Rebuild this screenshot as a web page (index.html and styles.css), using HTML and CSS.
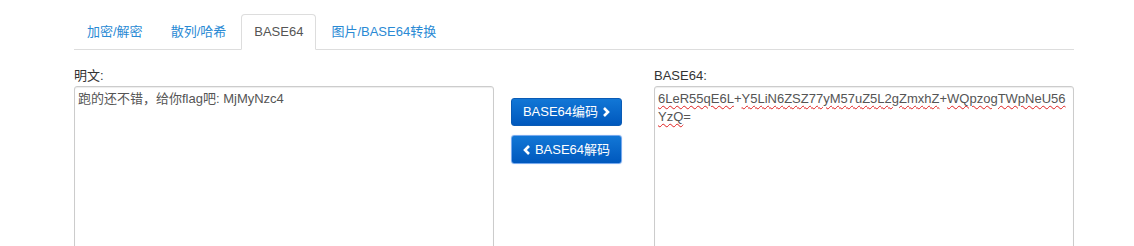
FILE: index.html
```html
<!DOCTYPE html>
<html lang="zh">
<head>
<meta charset="utf-8">
<title>BASE64</title>
<link rel="stylesheet" href="styles.css">
</head>
<body>
<div class="page">
  <ul class="tabs">
    <li class="tab"><a href="#">加密/解密</a></li>
    <li class="tab"><a href="#">散列/哈希</a></li>
    <li class="tab active"><a href="#">BASE64</a></li>
    <li class="tab"><a href="#">图片/BASE64转换</a></li>
  </ul>
  <div class="row">
    <div class="col">
      <label class="label">明文:</label>
      <div class="ta">跑的还不错，给你flag吧: MjMyNzc4</div>
    </div>
    <div class="mid">
      <button class="btn">BASE64编码 <svg class="chev" width="8" height="10" viewBox="0 0 8 10"><polyline points="2,1 6,5 2,9" fill="none" stroke="#fff" stroke-width="2.6"/></svg></button>
      <button class="btn focus"><svg class="chev" width="8" height="10" viewBox="0 0 8 10"><polyline points="6,1 2,5 6,9" fill="none" stroke="#fff" stroke-width="2.6"/></svg> BASE64解码</button>
    </div>
    <div class="col">
      <label class="label">BASE64:</label>
      <div class="ta"><div class="line"><span class="sp">6LeR55qE6L</span>+<span class="sp">Y5LiN6ZSZ77yM57uZ5L2gZmxhZ</span>+<span class="sp">WQpzogTWpNeU56</span></div><div class="line"><span class="sp">YzQ</span>=</div></div>
    </div>
  </div>
</div>
</body>
</html>
```
FILE: styles.css
```css
* { box-sizing: border-box; }
html, body { margin: 0; padding: 0; background: #fff; }
body {
  font-family: "Liberation Sans", Arial, "Noto Sans CJK SC", sans-serif;
  font-size: 13px;
  line-height: 18px;
  color: #333;
}
.page {
  width: 1000px;
  margin-left: 74px;
  padding-top: 14px;
}
.tabs {
  list-style: none;
  margin: 0;
  padding: 0;
  display: flex;
  border-bottom: 1px solid #ddd;
}
.tab {
  margin-right: 2px;
  margin-bottom: -1px;
}
.tab a {
  display: block;
  padding: 8px 12px;
  border: 1px solid transparent;
  border-radius: 4px 4px 0 0;
  color: #2a8ad4;
  text-decoration: none;
}
.tab.active a {
  color: #555;
  background: #fff;
  border-color: #ddd #ddd transparent #ddd;
}
.row {
  display: flex;
  margin-top: 17px;
}
.col {
  width: 420px;
  display: flex;
  flex-direction: column;
}
.label {
  display: block;
  margin-bottom: 1px;
  font-weight: normal;
}
.ta {
  height: 200px;
  border: 1px solid #ccc;
  border-radius: 3px;
  box-shadow: inset 0 1px 1px rgba(0,0,0,.075);
  padding: 3px;
  word-break: break-all;
  color: #555;
}
.line { white-space: nowrap; }
.sp {
  text-decoration: underline wavy #e02020;
  text-decoration-thickness: 1px;
  text-underline-offset: 2px;
}
.mid {
  width: 160px;
  padding-top: 31px;
  padding-left: 17px;
  display: flex;
  flex-direction: column;
  align-items: flex-start;
  gap: 9px;
}
.btn {
  font: inherit;
  font-size: 13px;
  line-height: 18px;
  color: #fff;
  width: 111px;
  height: 28px;
  padding: 4px 10px;
  border: 1px solid #0a5bb5;
  border-radius: 3px;
  background: linear-gradient(#1277d6, #0058bd);
  display: flex;
  align-items: center;
  justify-content: center;
  gap: 4px;
  cursor: pointer;
}
.btn.focus {
  height: 29px;
  border-color: #76a9ee;
  box-shadow: 0 0 1px rgba(80,140,230,.5);
}
.chev { display: block; }
```
